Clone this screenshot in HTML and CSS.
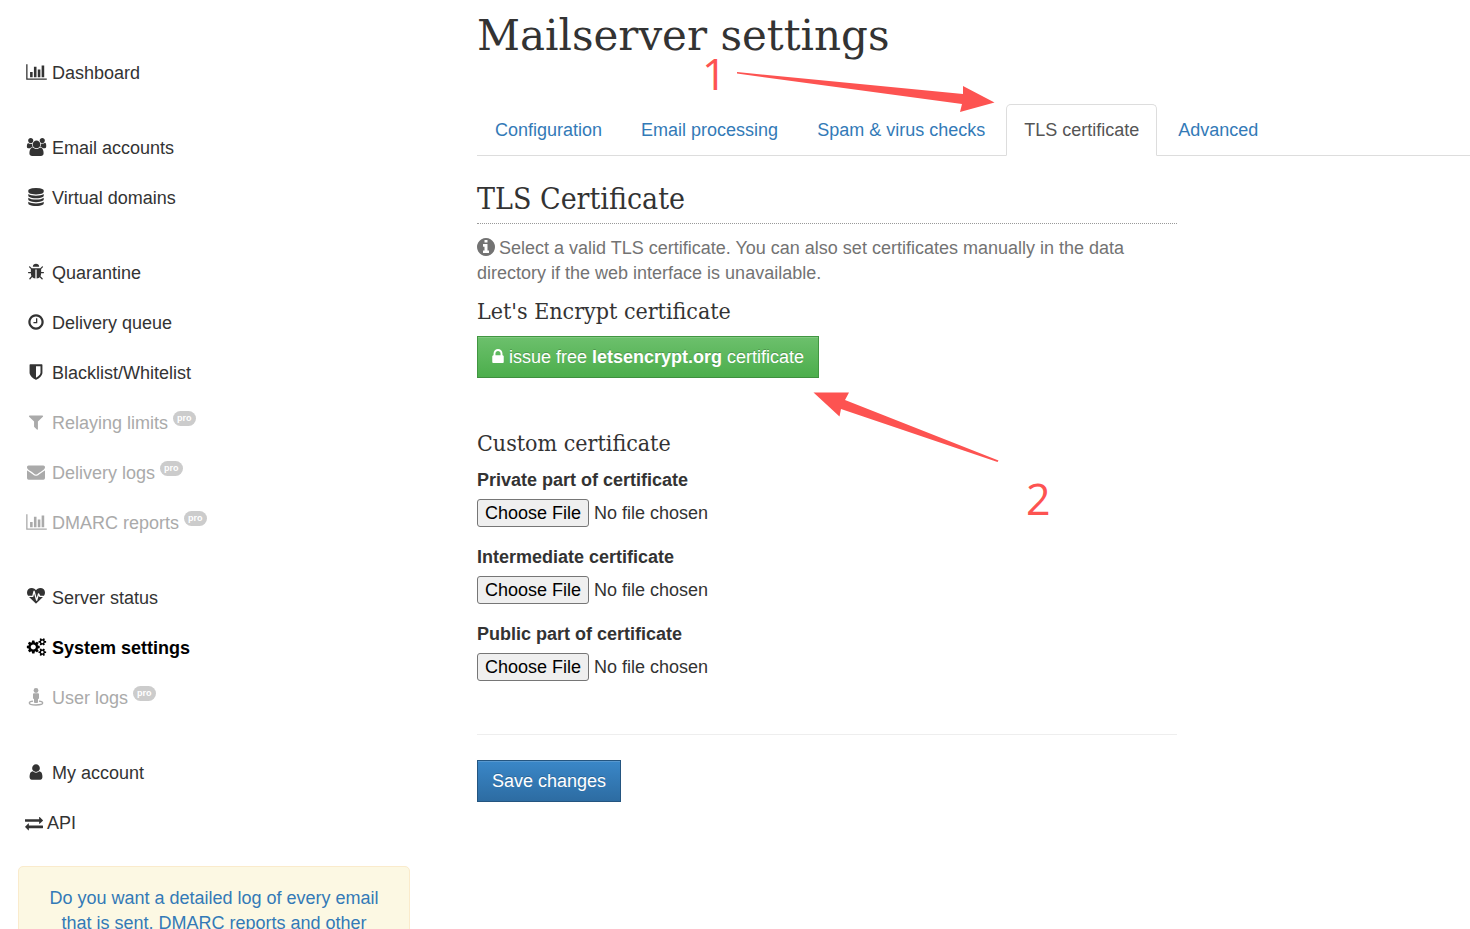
FILE: index.html
```html
<!DOCTYPE html>
<html lang="en">
<head>
    <meta charset="UTF-8">
    <meta name="viewport" content="width=device-width, initial-scale=1.0">
    <title>Mailserver settings</title>
    <link rel="stylesheet" href="styles.css">
</head>
<body>
    <div class="page">
        <aside class="sidebar">
            <nav class="menu">
                <ul class="menu-group">
                    <li><a class="menu-link" href="#"><svg class="icon icon-wide" viewBox="0 0 2048 1792"><path d="M640 896v512h-256v-512h256zm384-512v1024h-256v-1024h256zm1024 1152v128h-2048v-1536h128v1408h1920zm-640-896v768h-256v-768h256zm384-384v1152h-256v-1152h256z"/></svg>Dashboard</a></li>
                </ul>
                <ul class="menu-group">
                    <li><a class="menu-link" href="#"><svg class="icon icon-wide" viewBox="0 0 2048 1792"><path d="M657 896q-162 5-265 128h-134q-82 0-138-40.5t-56-118.5q0-353 124-353 6 0 43.5 21t97.5 42.5 119 21.5q67 0 133-23-5 37-5 66 0 159 93 288zm1071 637q0 120-73 189.5t-194 69.5h-874q-121 0-194-69.5t-73-189.5q0-53 3.5-103.5t14-109 26.5-108.5 43-97.5 62-81 85.5-53.5 111.5-20q10 0 43 21.5t73 48 107 48 135 21.5 135-21.5 107-48 73-48 43-21.5q61 0 111.5 20t85.5 53.5 62 81 43 97.5 26.5 108.5 14 109 3.5 103.5zm-1024-1277q0 106-75 181t-181 75-181-75-75-181 75-181 181-75 181 75 75 181zm704 384q0 159-112.5 271.5t-271.5 112.5-271.5-112.5-112.5-271.5 112.5-271.5 271.5-112.5 271.5 112.5 112.5 271.5zm576 225q0 78-56 118.5t-138 40.5h-134q-103-123-265-128 93-129 93-288 0-29-5-66 66 23 133 23 59 0 119-21.5t97.5-42.5 43.5-21q124 0 124 353zm-128-609q0 106-75 181t-181 75-181-75-75-181 75-181 181-75 181 75 75 181z"/></svg>Email accounts</a></li>
                    <li><a class="menu-link" href="#"><svg class="icon" viewBox="0 0 1792 1792"><path d="M896 768q237 0 443-43t325-127v170q0 69-103 128t-280 93.5-385 34.5-385-34.5-280-93.5-103-128v-170q119 84 325 127t443 43zm0 768q237 0 443-43t325-127v170q0 69-103 128t-280 93.5-385 34.5-385-34.5-280-93.5-103-128v-170q119 84 325 127t443 43zm0-384q237 0 443-43t325-127v170q0 69-103 128t-280 93.5-385 34.5-385-34.5-280-93.5-103-128v-170q119 84 325 127t443 43zm0-1152q208 0 385 34.5t280 93.5 103 128v128q0 69-103 128t-280 93.5-385 34.5-385-34.5-280-93.5-103-128v-128q0-69 103-128t280-93.5 385-34.5z"/></svg>Virtual domains</a></li>
                </ul>
                <ul class="menu-group">
                    <li><a class="menu-link" href="#"><svg class="icon" viewBox="0 0 1792 1792"><path d="M1696 960q0 26-19 45t-45 19h-224q0 171-67 290l208 209q19 19 19 45t-19 45q-18 19-45 19t-45-19l-198-197q-5 5-15 13t-42 28.5-65 36.5-82 29-97 13v-896h-128v896q-51 0-101.5-13.5t-87-33-66-39-43.5-32.5l-15-14-183 207q-20 21-48 21-24 0-43-16-19-18-20.5-44.5t15.5-46.5l202-227q-58-114-58-274h-224q-26 0-45-19t-19-45 19-45 45-19h224v-294l-173-173q-19-19-19-45t19-45 45-19 45 19l173 173h844l173-173q19-19 45-19t45 19 19 45-19 45l-173 173v294h224q26 0 45 19t19 45zm-480-576h-640q0-133 93.5-226.5t226.5-93.5 226.5 93.5 93.5 226.5z"/></svg>Quarantine</a></li>
                    <li><a class="menu-link" href="#"><svg class="icon" viewBox="0 0 1792 1792"><path d="M1024 544v448q0 14-9 23t-23 9h-320q-14 0-23-9t-9-23v-64q0-14 9-23t23-9h224v-352q0-14 9-23t23-9h64q14 0 23 9t9 23zm416 352q0-148-73-273t-198-198-273-73-273 73-198 198-73 273 73 273 198 198 273 73 273-73 198-198 73-273zm224 0q0 209-103 385.5t-279.5 279.5-385.5 103-385.5-103-279.5-279.5-103-385.5 103-385.5 279.5-279.5 385.5-103 385.5 103 279.5 279.5 103 385.5z"/></svg>Delivery queue</a></li>
                    <li><a class="menu-link" href="#"><svg class="icon" viewBox="0 0 1792 1792"><path d="M1344 960v-640h-448v1137q119-63 213-137 235-184 235-360zm192-768v768q0 86-33.5 170.5t-83 150-118 127.5-126.5 103-121 77.5-89.5 49.5-42.5 20q-12 6-26 6t-26-6q-16-7-42.5-20t-89.5-49.5-121-77.5-126.5-103-118-127.5-83-150-33.5-170.5v-768q0-26 19-45t45-19h1152q26 0 45 19t19 45z"/></svg>Blacklist/Whitelist</a></li>
                    <li><a class="menu-link disabled" href="#"><svg class="icon" viewBox="0 0 1792 1792"><path d="M1595 295q17 41-14 70l-493 493v742q0 42-39 59-13 5-25 5-27 0-45-19l-256-256q-19-19-19-45v-486l-493-493q-31-29-14-70 17-39 59-39h1280q42 0 59 39z"/></svg>Relaying limits<span class="badge">pro</span></a></li>
                    <li><a class="menu-link disabled" href="#"><svg class="icon" viewBox="0 0 1792 1792"><path d="M1792 710v794q0 66-47 113t-113 47h-1472q-66 0-113-47t-47-113v-794q44 49 101 87 362 246 497 345 57 42 92.5 65.5t94.5 48 110 24.5h2q51 0 110-24.5t94.5-48 92.5-65.5q170-123 498-345 57-39 100-87zm0-294q0 79-49 151t-122 123q-376 261-468 325-10 7-42.5 31t-54 38.5-52 32.5-57.5 27-50 9h-2q-23 0-50-9t-57.5-27-52-32.5-54-38.5-42.5-31q-91-64-262-182.5t-205-142.5q-62-42-117-115.5t-55-136.5q0-78 41.5-130t118.5-52h1472q65 0 112.5 47t47.5 113z"/></svg>Delivery logs<span class="badge">pro</span></a></li>
                    <li><a class="menu-link disabled" href="#"><svg class="icon icon-wide" viewBox="0 0 2048 1792"><path d="M640 896v512h-256v-512h256zm384-512v1024h-256v-1024h256zm1024 1152v128h-2048v-1536h128v1408h1920zm-640-896v768h-256v-768h256zm384-384v1152h-256v-1152h256z"/></svg>DMARC reports<span class="badge">pro</span></a></li>
                </ul>
                <ul class="menu-group">
                    <li><a class="menu-link" href="#"><svg class="icon" viewBox="0 0 1792 1792"><path d="M1280 896h305q-5 6-10 10.5t-9 7.5l-3 4-623 600q-18 18-44 18t-44-18l-624-602q-5-2-21-20h369q22 0 39.5-13.5t22.5-34.5l70-281 190 667q6 20 23 33t39 13q21 0 38-13t23-33l146-485 56 112q18 35 57 35zm512-428q0 145-103 300h-369l-111-221q-8-17-25.5-27t-36.5-8q-45 5-56 46l-129 430-196-686q-6-20-23.5-33t-39.5-13-39 13.5-22 34.5l-116 464h-423q-103-155-103-300 0-220 127-344t351-124q62 0 126.5 21.5t120 58 95.5 68.5 76 68q36-36 76-68t95.5-68.5 120-58 126.5-21.5q224 0 351 124t127 344z"/></svg>Server status</a></li>
                    <li><a class="menu-link active" href="#"><svg class="icon icon-wide" viewBox="-128 0 2048 1792"><path d="M832 896q0-106-75-181t-181-75-181 75-75 181 75 181 181 75 181-75 75-181zm768 512q0-52-38-90t-90-38-90 38-38 90q0 53 37.5 90.5t90.5 37.5 90.5-37.5 37.5-90.5zm0-1024q0-52-38-90t-90-38-90 38-38 90q0 53 37.5 90.5t90.5 37.5 90.5-37.5 37.5-90.5zm-384 421v185q0 10-7 19.5t-16 10.5l-155 24q-11 35-32 76 34 48 90 115 7 11 7 20 0 12-7 19-23 30-82.5 89.5t-78.5 59.5q-11 0-21-7l-115-90q-37 19-77 31-11 108-23 155-7 24-30 24h-186q-11 0-20-7.5t-10-17.5l-23-153q-34-10-75-31l-118 89q-7 7-20 7-11 0-21-8-144-133-144-160 0-9 7-19 10-14 41-53t47-61q-23-44-35-82l-152-24q-10-1-17-9.5t-7-19.5v-185q0-10 7-19.5t16-10.5l155-24q11-35 32-76-34-48-90-115-7-11-7-20 0-12 7-20 22-30 82-89t79-59q11 0 21 7l115 90q34-18 77-32 11-108 23-154 7-24 30-24h186q11 0 20 7.5t10 17.5l23 153q34 10 75 31l118-89q8-7 20-7 11 0 21 8 144 133 144 160 0 8-7 19-12 16-42 54t-45 60q23 48 34 82l152 23q10 2 17 10.5t7 19.5zm640 533v140q0 16-149 31-12 27-30 52 51 113 51 138 0 4-4 7-122 71-124 71-8 0-46-47t-52-68q-20 2-30 2t-30-2q-14 21-52 68t-46 47q-2 0-124-71-4-3-4-7 0-25 51-138-18-25-30-52-149-15-149-31v-140q0-16 149-31 13-29 30-52-51-113-51-138 0-4 4-7 4-2 35-20t59-34 30-16q8 0 46 46.5t52 67.5q20-2 30-2t30 2q51-71 92-112l6-2q4 0 124 70 4 3 4 7 0 25-51 138 17 23 30 52 149 15 149 31zm0-1024v140q0 16-149 31-12 27-30 52 51 113 51 138 0 4-4 7-122 71-124 71-8 0-46-47t-52-68q-20 2-30 2t-30-2q-14 21-52 68t-46 47q-2 0-124-71-4-3-4-7 0-25 51-138-18-25-30-52-149-15-149-31v-140q0-16 149-31 13-29 30-52-51-113-51-138 0-4 4-7 4-2 35-20t59-34 30-16q8 0 46 46.5t52 67.5q20-2 30-2t30 2q51-71 92-112l6-2q4 0 124 70 4 3 4 7 0 25-51 138 17 23 30 52 149 15 149 31z"/></svg>System settings</a></li>
                    <li><a class="menu-link disabled" href="#"><svg class="icon" viewBox="0 0 18 18"><circle cx="9" cy="2.5" r="2.4"/><path d="M7 5.3h4q1 0 1 1v4q0 .8-1 .8v3q0 .9-.9.9h-2.200q-.9 0-.9-.9v-3q-1 0-1-.8v-4q0-1 1-1z"/><path d="M6 13.2C3.800 13.4 2.300 14 2.300 15c0 1.300 3 2 6.700 2s6.700-.7 6.700-2c0-1-1.500-1.600-3.700-1.800" fill="none" stroke="currentColor" stroke-width="1.3"/></svg>User logs<span class="badge">pro</span></a></li>
                </ul>
                <ul class="menu-group">
                    <li><a class="menu-link" href="#"><svg class="icon" viewBox="0 0 1792 1792"><path d="M1536 1399q0 109-62.5 187t-150.5 78h-854q-88 0-150.5-78t-62.5-187q0-85 8.5-160.5t31.5-152 58.5-131 94-89 134.5-34.5q131 128 313 128t313-128q76 0 134.5 34.5t94 89 58.5 131 31.5 152 8.5 160.5zm-256-887q0 159-112.5 271.5t-271.5 112.5-271.5-112.5-112.5-271.5 112.5-271.5 271.5-112.5 271.5 112.5 112.5 271.5z"/></svg>My account</a></li>
                    <li><a class="menu-link compact" href="#"><svg class="icon" viewBox="0 0 1792 1792"><path d="M1792 1184v192q0 13-9.5 22.5t-22.5 9.5h-1376v192q0 13-9.5 22.5t-22.5 9.5q-12 0-24-10l-319-320q-9-9-9-22 0-14 9-23l320-320q9-9 23-9 13 0 22.5 9.5t9.5 22.5v192h1376q13 0 22.5 9.5t9.5 22.5zm0-544q0 14-9 23l-320 320q-9 9-23 9-13 0-22.5-9.5t-9.5-22.5v-192h-1376q-13 0-22.5-9.5t-9.5-22.5v-192q0-13 9.5-22.5t22.5-9.5h1376v-192q0-14 9-23t23-9q12 0 24 10l319 319q9 9 9 23z"/></svg>API</a></li>
                </ul>
            </nav>
            <div class="promo">
                <a href="#">Do you want a detailed log of every email that is sent, DMARC reports and other</a>
            </div>
        </aside>

        <main class="content">
            <h1>Mailserver settings</h1>
            <nav class="tabs">
                <a class="tab" href="#">Configuration</a>
                <a class="tab" href="#">Email processing</a>
                <a class="tab" href="#">Spam &amp; virus checks</a>
                <a class="tab current" href="#">TLS certificate</a>
                <a class="tab" href="#">Advanced</a>
            </nav>

            <form class="settings">
                <h2>TLS Certificate</h2>
                <p class="help"><svg class="info-icon" viewBox="128 128 1536 1536"><path d="M1152 1376v-160q0-14-9-23t-23-9h-96v-512q0-14-9-23t-23-9h-320q-14 0-23 9t-9 23v160q0 14 9 23t23 9h96v320h-96q-14 0-23 9t-9 23v160q0 14 9 23t23 9h448q14 0 23-9t9-23zm-128-896v-160q0-14-9-23t-23-9h-192q-14 0-23 9t-9 23v160q0 14 9 23t23 9h192q14 0 23-9t9-23zm640 416q0 209-103 385.5t-279.5 279.5-385.5 103-385.5-103-279.5-279.5-103-385.5 103-385.5 279.5-279.5 385.5-103 385.5 103 279.5 279.5 103 385.5z"/></svg>Select a valid TLS certificate. You can also set certificates manually in the data directory if the web interface is unavailable.</p>

                <h3>Let's Encrypt certificate</h3>
                <button type="button" class="btn btn-success"><svg class="lock-icon" viewBox="320 128 1152 1408"><path d="M640 768h512v-192q0-106-75-181t-181-75-181 75-75 181v192zm832 96v576q0 40-28 68t-68 28h-960q-40 0-68-28t-28-68v-576q0-40 28-68t68-28h32v-192q0-184 132-316t316-132 316 132 132 316v192h32q40 0 68 28t28 68z"/></svg>issue free <b>letsencrypt.org</b> certificate</button>

                <h3 class="custom-title">Custom certificate</h3>
                <div class="field">
                    <label for="private-cert">Private part of certificate</label>
                    <input type="file" id="private-cert">
                </div>
                <div class="field">
                    <label for="intermediate-cert">Intermediate certificate</label>
                    <input type="file" id="intermediate-cert">
                </div>
                <div class="field">
                    <label for="public-cert">Public part of certificate</label>
                    <input type="file" id="public-cert">
                </div>

                <hr>
                <button type="submit" class="btn btn-primary">Save changes</button>
            </form>

            <!-- step markers -->
            <span class="step step-one">1</span>
            <svg class="arrow arrow-one" width="258" height="42" viewBox="0 0 258 42"><path d="M0 2L226 24V16L257.500 32.500L223 42L225 34L0 3.500Z"/></svg>
            <svg class="arrow arrow-two" width="186" height="72" viewBox="0 0 186 72"><path d="M.5.5H36L32 8L185.500 68.500L184.500 70L28 17L26.500 24.500Z"/></svg>
            <span class="step step-two">2</span>
        </main>
    </div>
</body>
</html>
```
FILE: styles.css
```css
* {
    box-sizing: border-box;
}

body {
    margin: 0;
    height: 100vh;
    overflow: hidden;
    font-family: "Liberation Sans", Arial, sans-serif;
    font-size: 18px;
    line-height: 25px;
    color: #333;
    background: #fff;
}

a {
    color: #337ab7;
    text-decoration: none;
}

h1, h2, h3 {
    margin: 0;
    font-family: "Roboto Slab", "DejaVu Serif Condensed", "DejaVu Serif", serif;
    font-weight: normal;
}

.page {
    display: grid;
    grid-template-columns: 392px 1fr;
    column-gap: 67px;
    padding-left: 18px;
}

/* sidebar */
.menu {
    display: flex;
    flex-direction: column;
    gap: 25px;
    padding-top: 48px;
}

.menu-group {
    margin: 0;
    padding: 0;
    list-style: none;
}

.menu-link {
    display: flex;
    align-items: center;
    height: 50px;
    padding: 12px 7px;
    color: #333;
}

.menu-link.active {
    color: #000;
    font-weight: bold;
}

.menu-link.disabled {
    color: #aaa;
}

.icon {
    width: 18px;
    height: 18px;
    margin: 0 7px 2px 2px;
    fill: currentColor;
    flex: none;
}

.icon-wide {
    width: 21px;
    margin: 0 5px 2px 1px;
}

.compact .icon {
    margin: 0 4px 0 0;
}

.badge {
    align-self: flex-start;
    margin: 1px 0 0 5px;
    padding: 0 4px;
    border-radius: 8px;
    background: #ccc;
    color: #fff;
    font-size: 9px;
    font-weight: bold;
    line-height: 15px;
}

.promo {
    margin-top: 18px;
    padding: 19px;
    border: 1px solid #faebcc;
    border-radius: 5px;
    background: #fcf8e3;
    text-align: center;
}

/* main column */
.content {
    position: relative;
    min-width: 0;
}

h1 {
    padding: 11px 0 43px;
    font-family: "Roboto Slab", "DejaVu Serif", serif;
    font-size: 42px;
    line-height: 50px;
}

.tabs {
    display: flex;
    border-bottom: 1px solid #ddd;
}

.tab {
    margin: 0 3px -1px 0;
    padding: 13px 17px 12px;
    border: 1px solid transparent;
    border-radius: 5px 5px 0 0;
}

.tab.current {
    border-color: #ddd;
    border-bottom-color: #fff;
    background: #fff;
    color: #555;
}

.settings {
    max-width: 700px;
}

h2 {
    margin-bottom: 12px;
    padding: 26px 0 8px;
    border-bottom: 1px dotted #999;
    font-size: 30px;
    line-height: 33px;
}

.help {
    margin: 0 0 12px;
    color: #737373;
}

.info-icon {
    width: 18px;
    height: 18px;
    margin-right: 4px;
    fill: #737373;
    vertical-align: -2px;
}

h3 {
    margin-bottom: 12px;
    font-size: 23px;
    line-height: 26px;
}

.custom-title {
    margin-top: 52px;
}

.btn {
    display: block;
    height: 42px;
    padding: 0 14px;
    border: 1px solid;
    color: #fff;
    font: inherit;
    text-shadow: 0 -1px 0 rgba(0, 0, 0, 0.2);
}

.btn-success {
    border-color: #419641 #419641 #3e8f3e;
    background: linear-gradient(#6cc06c, #4cae4c);
    box-shadow: inset 0 1px 0 rgba(255, 255, 255, 0.15);
}

.btn-primary {
    border-color: #245580;
    background: linear-gradient(#3a87c8, #2d6ca2);
    box-shadow: inset 0 1px 0 rgba(255, 255, 255, 0.15);
}

.lock-icon {
    width: 12px;
    height: 14px;
    margin-right: 5px;
    fill: #fff;
}

.field {
    margin-bottom: 18px;
}

.field label {
    display: block;
    margin-bottom: 6px;
    font-weight: bold;
}

.field input {
    display: block;
    width: 100%;
    height: 28px;
    font: inherit;
    color: #333;
}

.field input::file-selector-button {
    height: 28px;
    margin: 0 5px 0 0;
    padding: 0 7px;
    border: 1px solid #767676;
    border-radius: 3px;
    background: #efefef;
    color: #000;
    font: inherit;
}

hr {
    margin: 53px 0 25px;
    border: 0;
    border-top: 1px solid #eee;
}

/* step markers over the form */
.step {
    position: absolute;
    color: #fd5351;
    font-family: "Open Sans", sans-serif;
    font-size: 43px;
    line-height: 50px;
}

.step-one {
    left: 225px;
    top: 49px;
}

.step-two {
    left: 549px;
    top: 474px;
}

.arrow {
    position: absolute;
    fill: #fd5351;
}

.arrow-one {
    left: 260px;
    top: 70px;
}

.arrow-two {
    left: 336px;
    top: 392px;
}
```
